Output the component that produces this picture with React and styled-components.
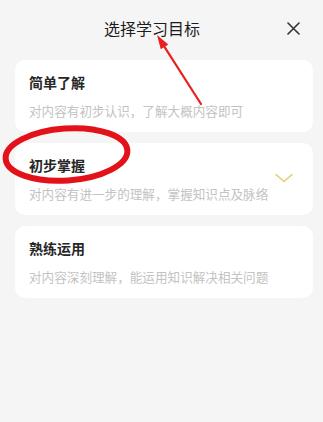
import React from 'react';
import styled, { createGlobalStyle } from 'styled-components';

const GlobalStyle = createGlobalStyle`
  html, body {
    margin: 0;
    padding: 0;
    background: #f5f5f5;
  }
  body {
    font-family: "Noto Sans CJK SC", "Noto Sans", sans-serif;
  }
`;

const Page = styled.div`
  position: relative;
  width: 323px;
  height: 422px;
  box-sizing: border-box;
  padding: 0 10px 0 15px;
  background: #f5f5f5;
  overflow: hidden;
`;

const Header = styled.div`
  display: flex;
  align-items: center;
  justify-content: space-between;
  height: 56px;
  margin-bottom: 4px;
`;

const Title = styled.div`
  margin-left: 89px;
  font-size: 16px;
  line-height: 20px;
  color: #1c1c1c;
`;

const CloseButton = styled.button`
  display: flex;
  align-items: center;
  justify-content: center;
  width: 14px;
  height: 14px;
  margin-right: 13px;
  padding: 0;
  border: 0;
  background: none;
`;

const List = styled.div`
  display: flex;
  flex-direction: column;
  gap: 11px;
`;

const Card = styled.div`
  display: flex;
  align-items: flex-start;
  justify-content: space-between;
  height: 72px;
  box-sizing: border-box;
  padding: 12px 20px 0 14px;
  border-radius: 10px;
  background: #ffffff;
`;

const CardText = styled.div`
  display: flex;
  flex-direction: column;
`;

const CardTitle = styled.div`
  font-size: 14px;
  line-height: 20px;
  font-weight: 700;
  color: #262626;
`;

const CardDesc = styled.div`
  margin-top: 10px;
  font-size: 12.6px;
  line-height: 18px;
  color: #c3c3c3;
`;

const Check = styled.div`
  align-self: center;
  margin-top: -14px;
  display: flex;
  visibility: ${p => (p.$on ? 'visible' : 'hidden')};
`;

const Marks = styled.svg`
  position: absolute;
  left: 0;
  top: 0;
  pointer-events: none;
`;

const goals = [
  { title: '简单了解', desc: '对内容有初步认识，了解大概内容即可' },
  { title: '初步掌握', desc: '对内容有进一步的理解，掌握知识点及脉络', selected: true },
  { title: '熟练运用', desc: '对内容深刻理解，能运用知识解决相关问题' },
];

export default function App() {
  return (
    <>
      <GlobalStyle />
      <Page>
        <Header>
          <Title>选择学习目标</Title>
          <CloseButton aria-label="关闭">
            <svg width="13" height="13" viewBox="0 0 13 13">
              <path d="M1 1L12 12M12 1L1 12" stroke="#333" strokeWidth="1.6" strokeLinecap="round" />
            </svg>
          </CloseButton>
        </Header>
        <List>
          {goals.map(g => (
            <Card key={g.title}>
              <CardText>
                <CardTitle>{g.title}</CardTitle>
                <CardDesc>{g.desc}</CardDesc>
              </CardText>
              <Check $on={g.selected}>
                <svg width="18" height="10" viewBox="0 0 18 10">
                  <path d="M1 1.5L9 8.5L17 1.5" fill="none" stroke="#e5c766" strokeWidth="1.3" strokeLinecap="round" strokeLinejoin="round" />
                </svg>
              </Check>
            </Card>
          ))}
        </List>
        <Marks width="323" height="422" viewBox="0 0 323 422">
          <ellipse cx="66.5" cy="154.5" rx="61" ry="26" fill="none" stroke="#e3111a" strokeWidth="6" transform="rotate(-4 66.5 154.5)" />
          <path d="M201 104L164.5 46.8" stroke="#e8201f" strokeWidth="2.2" strokeLinecap="round" />
          <polygon points="157,35 168.3,44.4 160.8,49.2" fill="#e8201f" />
        </Marks>
      </Page>
    </>
  );
}
